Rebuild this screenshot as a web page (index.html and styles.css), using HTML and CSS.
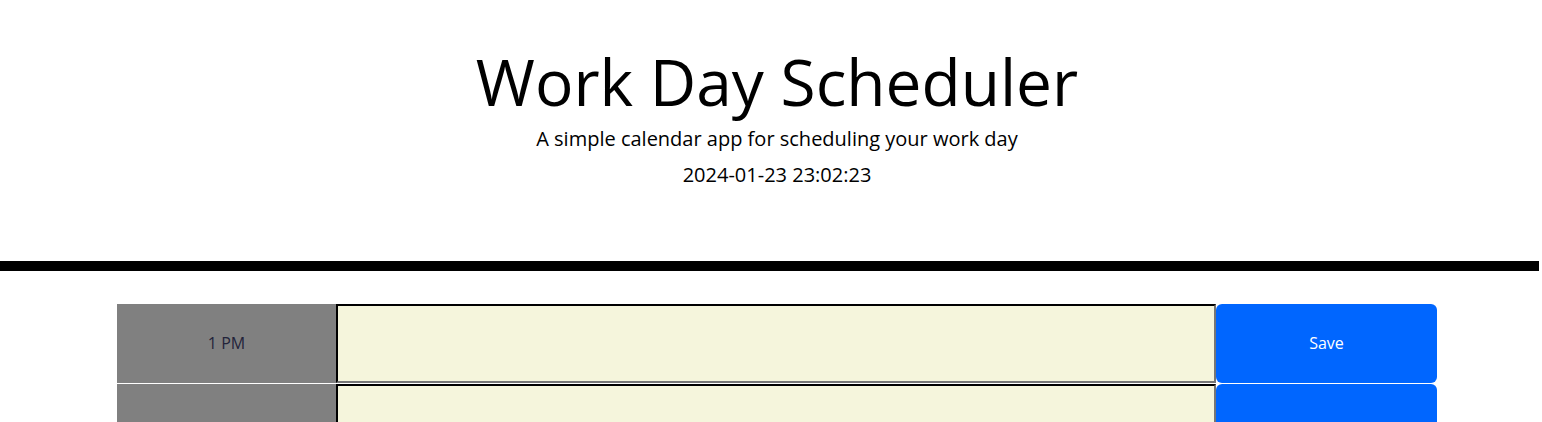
FILE: index.html
```html
<!DOCTYPE html>
<html lang="en">
<head>
<meta charset="utf-8">
<title>Work Day Scheduler</title>
<link rel="stylesheet" href="styles.css">
</head>
<body>
<header class="jumbotron">
  <h1 class="display">Work Day Scheduler</h1>
  <p class="lead">A simple calendar app for scheduling your work day</p>
  <p class="lead date">2024-01-23 23:02:23</p>
</header>
<main class="container">
  <div class="time-block">
    <div class="hour">1 PM</div>
    <textarea class="description"></textarea>
    <button class="save-btn">Save</button>
  </div>
  <div class="time-block">
    <div class="hour"></div>
    <textarea class="description"></textarea>
    <button class="save-btn"></button>
  </div>
</main>
</body>
</html>
```
FILE: styles.css
```css
html, body {
  margin: 0;
  padding: 0;
  background: #fff;
}
body {
  font-family: "Open Sans", sans-serif;
  font-size: 16px;
  line-height: 1.5;
  color: #212529;
  overflow: hidden;
}
.jumbotron {
  margin-right: 3px;
  padding: 44px 0 71px 15px;
  text-align: center;
  border-bottom: 10px solid #000;
  margin-bottom: 32px;
}
.display {
  margin: 0;
  font-size: 64px;
  font-weight: 400;
  line-height: 1.2;
  color: #000;
}
.lead {
  margin: 3px 0 0;
  font-size: 20px;
  font-weight: 400;
  color: #000;
  line-height: 1.5;
}
.date {
  margin-top: 6px;
}
.container {
  width: 1320px;
  margin: 0 auto;
  position: relative;
  left: 6px;
}
.time-block {
  display: flex;
  height: 80px;
  border-top: 1px solid #fff;
  box-sizing: border-box;
}
.hour {
  width: 219px;
  flex: none;
  background: #808080;
  color: #23233a;
  font-size: 16px;
  display: flex;
  align-items: center;
  justify-content: center;
}
.description {
  width: 880px;
  flex: none;
  box-sizing: border-box;
  margin: 0;
  border: 2px inset #767676;
  border-top-color: #1f1f1f;
  border-left-color: #1f1f1f;
  border-right-color: #767676;
  border-bottom-color: #767676;
  background: #f5f5dc;
  resize: none;
  font-family: inherit;
}
.save-btn {
  width: 221px;
  flex: none;
  border: none;
  border-radius: 6px;
  background: #0066ff;
  color: #fff;
  font-family: inherit;
  font-size: 16px;
  margin: 0;
}
```
